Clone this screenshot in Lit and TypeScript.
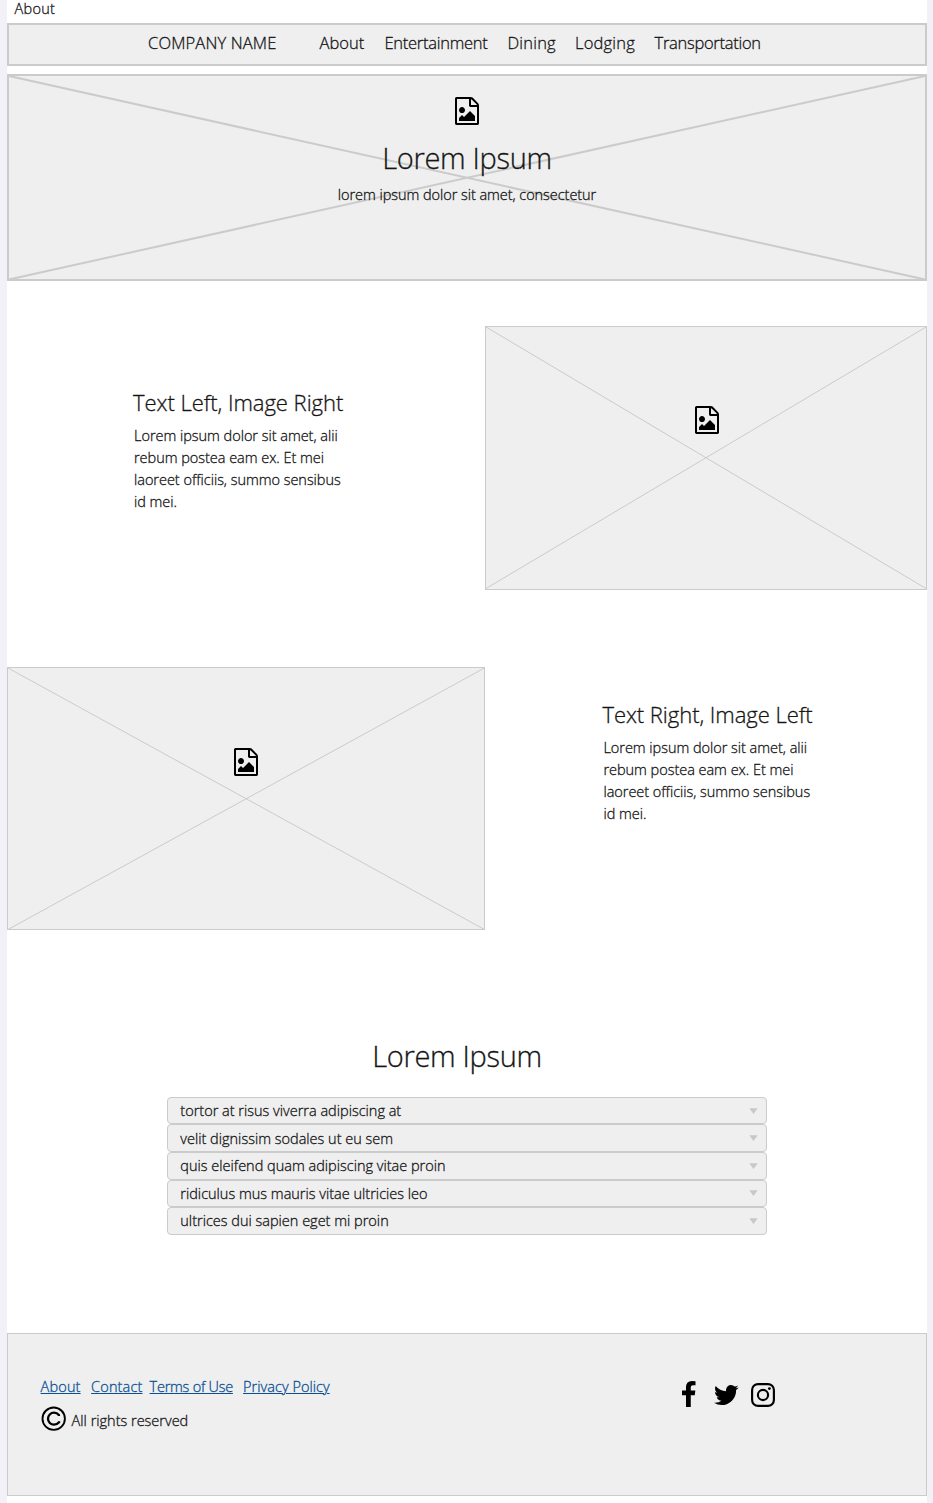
import { LitElement, html, css, svg } from "lit";
import { customElement, property } from "lit/decorators.js";

const imageIcon = html`<svg class="file-icon" viewBox="0 0 1536 1792" width="24" height="28">
  <path d="M1468 380q28 28 48 76t20 88v1152q0 40-28 68t-68 28h-1344q-40 0-68-28t-28-68v-1600q0-40 28-68t68-28h896q40 0 88 20t76 48zm-444-244v376h376q-10-29-22-41l-313-313q-12-12-41-22zm384 1528v-1024h-416q-40 0-68-28t-28-68v-416h-768v1536h1280zm-128-448v320h-1024v-192l192-192 128 128 384-384zm-832-192q-80 0-136-56t-56-136 56-136 136-56 136 56 56 136-56 136-136 56z"/>
</svg>`;

/** Grey box crossed by two diagonals, with its content laid over them. */
@customElement("image-placeholder")
class ImagePlaceholder extends LitElement {
  @property({ type: Number }) line = 1;
  static styles = css`
    :host { display: grid; box-sizing: border-box; background: #efefef; }
    .cross { grid-area: 1 / 1; width: 100%; height: 100%; min-height: 0; display: block; overflow: visible; }
    .content { grid-area: 1 / 1; position: relative; display: flex; flex-direction: column; align-items: center; }
  `;
  render() {
    return html`
      <svg class="cross">
        ${svg`<line x1="0" y1="0" x2="100%" y2="100%" stroke="#cbcbcb" stroke-width=${this.line}></line>
        <line x1="100%" y1="0" x2="0" y2="100%" stroke="#cbcbcb" stroke-width=${this.line}></line>`}
      </svg>
      <div class="content"><slot></slot></div>`;
  }
}

@customElement("app-root")
class AppRoot extends LitElement {
  static styles = css`
    :host {
      display: block; box-sizing: border-box; height: 1503px; padding: 0 6px 0 7px;
      background: #f1f1f7; color: #151515;
      font: 300 14.5px/22px "Open Sans", sans-serif;
      font-variant-ligatures: none;
      -webkit-text-stroke: 0.3px currentColor;
    }
    .page { background: #fff; height: 1503px; display: flex; flex-direction: column; }
    svg { display: block; fill: #000; }
    h1, h2, p, ul { margin: 0; padding: 0; font-weight: 300; }
    .crumb { height: 23px; line-height: 17px; padding-left: 7.5px; letter-spacing: 0.3px; }
    .nav {
      box-sizing: border-box; height: 43px; border: 2px solid #cbcbcb; background: #efefef;
      display: grid; grid-template-columns: 171.5px 65px 123px 67.5px 79.5px 1fr;
      padding-left: 139px; font-size: 16.5px; line-height: 35px; white-space: nowrap;
    }
    .brand { letter-spacing: 0.15px; }
    .nav .tight { letter-spacing: -0.27px; }
    .nav .loose { letter-spacing: 0.2px; }
    .hero { height: 207.5px; margin-top: 7.5px; border: 2px solid #cbcbcb; }
    .hero .file-icon { margin-top: 21.5px; }
    .big { font-size: 29px; line-height: 40px; letter-spacing: -0.33px; }
    .hero .big { margin-top: 13px; }
    .hero p { margin-top: 5.5px; letter-spacing: -0.05px; }
    .split { display: grid; height: 263.5px; }
    .first { grid-template-columns: 478px 442px; margin-top: 45.3px; }
    .second { grid-template-columns: 478.4px 441.6px; margin-top: 77px; }
    .pic { border: 1px solid #cbcbcb; }
    .first .file-icon { margin: 79px 0 0 2px; }
    .second .file-icon { margin-top: 80px; }
    .copy { white-space: nowrap; }
    .first .copy { padding: 61px 0 0 126px; }
    .second .copy { padding: 32.7px 0 0 117px; }
    .copy h2 { font-size: 22px; line-height: 30px; letter-spacing: -0.04px; }
    .copy p { padding: 7.5px 0 0 1px; letter-spacing: -0.03px; }
    .faq { margin-top: 106px; display: flex; flex-direction: column; align-items: center; }
    .faq .big { margin-right: 20px; }
    .list { list-style: none; width: 600px; margin-top: 20.5px; }
    .item {
      box-sizing: border-box; height: 27.6px; line-height: 26px; border: 1.3px solid #cbcbcb;
      border-radius: 4px; background: #efefef; padding: 0 8.5px 0 12.3px; letter-spacing: 0;
      display: flex; justify-content: space-between; align-items: center;
    }
    .item span { padding-top: 0.8px; }
    .arrow { fill: #c8c8c8; }
    .footer {
      box-sizing: border-box; height: 163px; margin-top: 98px; border: 1px solid #cbcbcb;
      background: #efefef; display: grid; grid-template-columns: 641.8px 1fr; padding: 42.3px 0 0 32.6px;
    }
    .links { display: grid; grid-template-columns: 50.5px 58.5px 93.5px 1fr; white-space: nowrap; }
    .links a { color: #0b4f94; text-decoration: underline; text-decoration-thickness: 1px; text-underline-offset: 1px; }
    .links .wide { letter-spacing: 0.15px; }
    .links .narrow { letter-spacing: -0.25px; }
    .links .mid { letter-spacing: 0.03px; }
    .rights { display: flex; gap: 6px; margin-top: 8px; }
    .rights span { padding-top: 4px; }
    .social { display: flex; padding-top: 4.7px; }
    .fb { margin-right: 18px; }
    .tw { margin: 4px 12.5px 0 0; }
    .ig { margin-top: 2px; }
  `;

  private questions = [
    "tortor at risus viverra adipiscing at",
    "velit dignissim sodales ut eu sem",
    "quis eleifend quam adipiscing vitae proin",
    "ridiculus mus mauris vitae ultricies leo",
    "ultrices dui sapien eget mi proin",
  ];

  private copy(title: string) {
    return html`<div class="copy"><h2>${title}</h2>
      <p>Lorem ipsum dolor sit amet, alii<br>rebum postea eam ex. Et mei<br>laoreet officiis, summo sensibus<br>id mei.</p></div>`;
  }

  render() {
    return html`<div class="page">
      <div class="crumb">About</div>
      <nav class="nav">
        <span class="brand">COMPANY NAME</span><span>About</span><span class="tight">Entertainment</span>
        <span class="loose">Dining</span><span class="loose">Lodging</span><span class="tight">Transportation</span>
      </nav>
      <image-placeholder class="hero" line="2">
        ${imageIcon}
        <h1 class="big">Lorem Ipsum</h1>
        <p>lorem ipsum dolor sit amet, consectetur</p>
      </image-placeholder>
      <section class="split first">
        ${this.copy("Text Left, Image Right")}
        <image-placeholder class="pic">${imageIcon}</image-placeholder>
      </section>
      <section class="split second">
        <image-placeholder class="pic">${imageIcon}</image-placeholder>
        ${this.copy("Text Right, Image Left")}
      </section>
      <section class="faq">
        <h2 class="big">Lorem Ipsum</h2>
        <ul class="list">
          ${this.questions.map((q) => html`<li class="item"><span>${q}</span>
            <svg class="arrow" width="9" height="6" viewBox="0 0 9 6"><path d="M0.3 0.2h8.4L4.5 5.9z"/></svg></li>`)}
        </ul>
      </section>
      <footer class="footer">
        <div>
          <div class="links">
            <span><a class="wide">About</a></span><span><a class="wide">Contact</a></span>
            <span><a class="narrow">Terms of Use</a></span><span><a class="mid">Privacy Policy</a></span>
          </div>
          <div class="rights">
            <svg width="25" height="25" viewBox="0 0 25 25">
              <g fill="none" stroke="#000">
                <circle cx="12.7" cy="12.7" r="11.2" stroke-width="1.9"/>
                <path d="M18.1 15.2v1.1C16.6 18 15 18.700 13 18.700a6 6 0 0 1 0-12c2 0 3.600.7 4.900 2.200v1" stroke-width="2.3"/>
              </g>
            </svg>
            <span>All rights reserved</span>
          </div>
        </div>
        <div class="social">
          <svg class="fb" width="14" height="26" viewBox="479 0 896 1664"><path d="M1343 12v264h-157q-86 0-116 36t-30 108v189h293l-39 296h-254v759h-306v-759h-255v-296h255v-218q0-186 104-288.500t277-102.500q147 0 228 12z"/></svg>
          <svg class="tw" width="24.600" height="20" viewBox="108 256 1576 1280"><path d="M1684 408q-67 98-162 167 1 14 1 42 0 130-38 259.500t-115.500 248.500-184.500 210.500-258 146-323 54.500q-271 0-496-145 35 4 78 4 225 0 401-138-105-2-188-64.500t-114-159.500q33 5 61 5 43 0 85-11-112-23-185.500-111.500t-73.500-205.500v-4q68 38 146 41-66-44-105-115t-39-154q0-88 44-163 121 149 294.500 238.500t371.500 99.500q-8-38-8-74 0-134 94.500-228.500t228.500-94.500q140 0 236 102 109-21 205-78-37 115-142 178 93-10 186-50z"/></svg>
          <svg class="ig" width="24" height="24" viewBox="0 0 24 24">
            <rect x="1.100" y="1.100" width="21.800" height="21.800" rx="6" fill="none" stroke="#000" stroke-width="2.150"/>
            <circle cx="12" cy="12" r="5.100" fill="none" stroke="#000" stroke-width="2.150"/>
            <circle cx="18.400" cy="5.600" r="1.440"/>
          </svg>
        </div>
      </footer>
    </div>`;
  }
}
